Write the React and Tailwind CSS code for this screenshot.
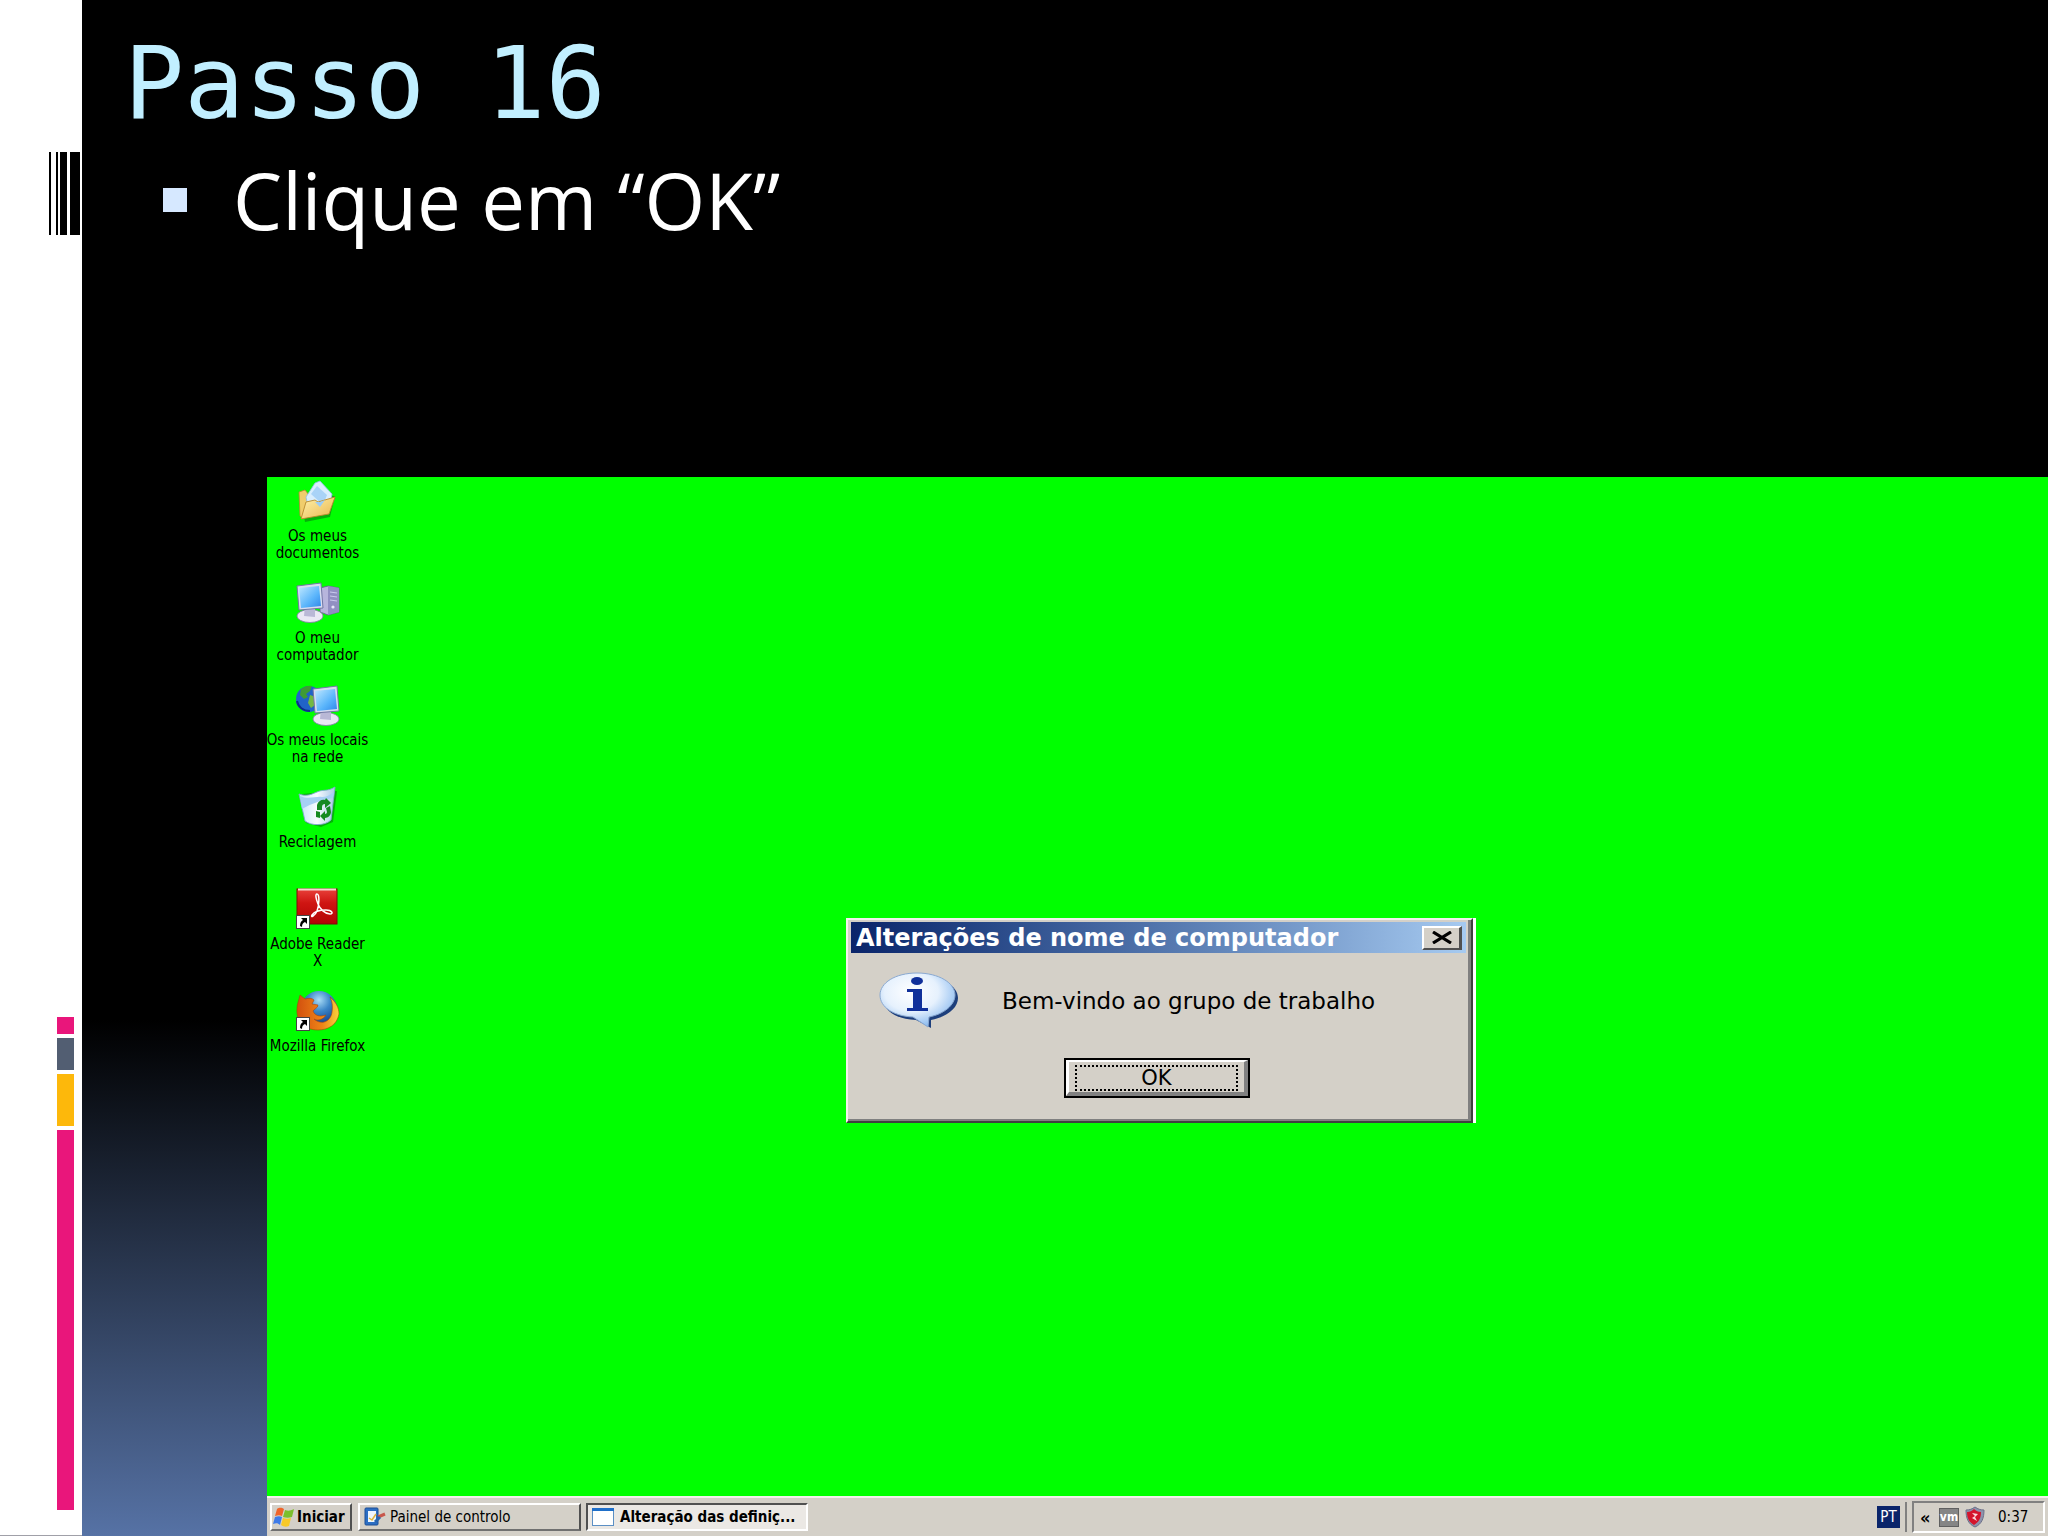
import React from "react";

const UI = "font-['DejaVu_Sans_Condensed','DejaVu_Sans',sans-serif] [font-stretch:condensed]";

function ShortcutArrow() {
  return (
    <g>
      <rect x="0.5" y="27.5" width="13" height="13" fill="#fff" stroke="#444" />
      <path d="M5 30h6v6l-2-2c-2 1-3 2-3 5l-2-1c0-3 1-5 3-6z" fill="#000" />
    </g>
  );
}

function DocumentsIcon() {
  return (
    <svg viewBox="0 0 44 42" className="h-[42px] w-11" aria-hidden="true">
      <defs>
        <linearGradient id="fold" x1="0" y1="0" x2="1" y2="1">
          <stop offset="0" stopColor="#fff3ae" />
          <stop offset="1" stopColor="#e9b54c" />
        </linearGradient>
      </defs>
      <path d="M4 13l6-2 3 4 26 1-5 21-25 5z" fill="#0a7a10" opacity=".6" />
      <path d="M3 12l6-2 4 5-5 24-4-3z" fill="#f0cd6c" stroke="#b98a2c" strokeWidth=".8" />
      <path d="M10 17L19 3l5-2 12 13-3 18-19 4z" fill="#d9eefd" stroke="#8bbce8" strokeWidth=".8" />
      <path d="M15 14l6-8 10 9-4 10z" fill="#a9d3f7" />
      <path d="M5 39l5-17 9-2 3 2 17-5-6 17z" fill="url(#fold)" stroke="#b98a2c" strokeWidth=".9" />
      <path d="M19 22l5 5 5-7-5 2z" fill="#9cccf4" />
    </svg>
  );
}

function Monitor({ x = 0 }) {
  return (
    <g transform={`translate(${x} 0)`}>
      <ellipse cx="14" cy="34" rx="13" ry="6.500" fill="#e9e8f4" stroke="#8785a8" strokeWidth=".9" />
      <path d="M9 24l10 2v9l-11-1z" fill="#b9b8d6" />
      <path d="M1 4l24-3 2 25-24 2z" fill="#d7dcf0" stroke="#7178a4" strokeWidth="1" />
      <path d="M3 6l20-2 2 20-20 2z" fill="url(#screen)" />
    </g>
  );
}

function ScreenGradient() {
  return (
    <defs>
      <linearGradient id="screen" x1="0" y1="0" x2="1" y2="1">
        <stop offset="0" stopColor="#bfe8ff" />
        <stop offset=".6" stopColor="#59b4fb" />
        <stop offset="1" stopColor="#2f86e8" />
      </linearGradient>
    </defs>
  );
}

function ComputerIcon() {
  return (
    <svg viewBox="0 0 44 42" className="h-[42px] w-11" aria-hidden="true">
      <ScreenGradient />
      <path d="M24 6l8-2 11 2v24l-11 3-8-3z" fill="#b7b5dc" stroke="#66648f" strokeWidth=".9" />
      <path d="M32 4l11 2v24l-11 3z" fill="#918fc2" />
      <path d="M34 10l7 1M34 14l7 1M34 18l7 1" stroke="#c9c8ec" strokeWidth="1.200" />
      <circle cx="37" cy="25" r="1.600" fill="#e6e6fa" />
      <Monitor />
    </svg>
  );
}

function NetworkIcon() {
  return (
    <svg viewBox="0 0 44 42" className="h-[42px] w-11" aria-hidden="true">
      <ScreenGradient />
      <circle cx="13" cy="15" r="13" fill="#2163c8" />
      <path d="M5 5c4-3 8-4 11-3l-2 5-4 3 2 3-4 2-4-4z" fill="#3f9b35" />
      <path d="M14 11l6 2-1 8-4 3-3-5z" fill="#73b943" />
      <path d="M1 17c1 6 6 10 13 10" fill="none" stroke="#0c2f86" strokeWidth="2" />
      <g transform="translate(0 1)">
        <Monitor x={16} />
      </g>
    </svg>
  );
}

function RecycleIcon() {
  return (
    <svg viewBox="0 0 44 42" className="h-[42px] w-11" aria-hidden="true">
      <defs>
        <linearGradient id="bin" x1="0" y1="0" x2="1" y2="0">
          <stop offset="0" stopColor="#c6e4fb" />
          <stop offset=".5" stopColor="#f8fcff" />
          <stop offset="1" stopColor="#a9c8e6" />
        </linearGradient>
      </defs>
      <path d="M6 8l35-3-4 31-12 5-15-4z" fill="#087310" opacity=".55" />
      <path d="M3 8c8 3 13 0 18-2 6-3 10 0 18-5l-4 33c-6 6-20 6-26 1z" fill="url(#bin)" stroke="#7fa8cf" strokeWidth=".9" />
      <path d="M4 10c8 4 16 0 22 1 4 0 8-2 12-5l-1 6c-10 2-21 5-31 11z" fill="#a6d0f4" />
      <g fill="#168a22">
        <path d="M21 24v-5c1-4 5-6 8-5l1-2 5 5-6 5v-4c-2 0-3 1-3 3v3z" />
        <path d="M34 20l1 6c0 3-3 6-6 6v3l-5-5 5-5v3c1 0 2-1 2-2l-1-4z" />
        <path d="M20 25l4 1v6l-4-1z" />
      </g>
    </svg>
  );
}

function AdobeIcon() {
  return (
    <svg viewBox="0 0 44 42" className="h-[42px] w-11" aria-hidden="true">
      <defs>
        <linearGradient id="pdf" x1="0" y1="0" x2="0" y2="1">
          <stop offset="0" stopColor="#e8413a" />
          <stop offset=".4" stopColor="#cf1512" />
          <stop offset="1" stopColor="#b30505" />
        </linearGradient>
      </defs>
      <rect x="1" y="1" width="40" height="35" fill="url(#pdf)" stroke="#7c0a08" />
      <path d="M2 1.500h38" stroke="#f3d9d2" strokeWidth="2" />
      <path d="M21 6c-2 0-1 5 1 10s7 10 12 10c4 0 2-4-4-4s-12 2-14 5 3 1 5-4 3-17 0-17z" fill="none" stroke="#fff" strokeWidth="1.500" />
      <ShortcutArrow />
    </svg>
  );
}

function FirefoxIcon() {
  return (
    <svg viewBox="0 0 44 42" className="h-[42px] w-11" aria-hidden="true">
      <defs>
        <radialGradient id="globe" cx=".5" cy=".25" r=".7">
          <stop offset="0" stopColor="#a9dcf6" />
          <stop offset=".45" stopColor="#3b86c8" />
          <stop offset="1" stopColor="#123c86" />
        </radialGradient>
        <linearGradient id="fox" x1="0" y1="0" x2="1" y2="0">
          <stop offset="0" stopColor="#d2500f" />
          <stop offset=".6" stopColor="#ee8417" />
          <stop offset="1" stopColor="#fbd33b" />
        </linearGradient>
      </defs>
      <circle cx="23" cy="19" r="18" fill="url(#globe)" />
      <path d="M4 5l5 4c4-1 7-1 9 1l-2 4 6 1c0 3-4 4-5 6 2 5 7 6 13 4-3 5-9 6-12 4 8 7 17 2 18-7 1-6 0-11-2-15 6 5 9 11 9 17-2 11-11 16-21 16C8 40 0 31 1 19c0-5 2-9 3-14z" fill="url(#fox)" stroke="#a8430d" strokeWidth=".6" />
      <ShortcutArrow />
    </svg>
  );
}

function InfoIcon() {
  return (
    <svg viewBox="0 0 80 58" className="h-[58px] w-20" aria-hidden="true">
      <defs>
        <radialGradient id="bubble" cx=".42" cy=".35" r=".65">
          <stop offset="0" stopColor="#fff" />
          <stop offset=".55" stopColor="#e6f1fd" />
          <stop offset="1" stopColor="#8fbdf0" />
        </radialGradient>
      </defs>
      <path d="M41 4c22 0 38 10 38 22 0 10-11 19-27 22v8L37 48C17 47 5 39 4 27z" fill="#1d3f7c" />
      <path d="M38 1c22 0 38 10 38 22 0 10-11 19-26 22l-1 10-15-10C14 44 1 35 1 23 1 11 16 1 38 1z" fill="url(#bubble)" stroke="#8aa9d1" />
      <ellipse cx="38" cy="9" rx="6" ry="4" fill="#10309a" />
      <path d="M28 17h15v19h6v3H28v-3h6V20h-6z" fill="#10309a" />
    </svg>
  );
}

function WindowsFlag() {
  return (
    <svg viewBox="0 0 22 20" className="h-5 w-[22px] shrink-0" aria-hidden="true">
      <path d="M4 2c3-2 5-1 7 0L9 9C7 8 5 8 2 9z" fill="#f0642a" />
      <path d="M12 3c3 1 5 1 9-1l-2 8c-3 1-6 1-9 0z" fill="#7cbf2c" />
      <path d="M2 10c3-1 5-1 7 0l-2 8c-2-2-4-2-7-1z" fill="#3f7be8" />
      <path d="M10 11c3 1 5 1 8 0l-2 8c-3 1-5 1-8-1z" fill="#f8c927" />
    </svg>
  );
}

function PanelIcon() {
  return (
    <svg viewBox="0 0 22 20" className="h-5 w-[22px] shrink-0" aria-hidden="true">
      <rect x="1" y="1" width="13" height="17" rx="1" fill="#2c6fc4" stroke="#1d4f95" />
      <rect x="4" y="4" width="8" height="11" fill="#eef6fd" />
      <path d="M5 11l3 2 4-6" fill="none" stroke="#e0b43c" strokeWidth="1.500" />
      <path d="M14 10l7-3" stroke="#c8574c" strokeWidth="3" />
      <path d="M11 15l5-5" stroke="#2a66b0" strokeWidth="3" />
    </svg>
  );
}

function WindowIcon() {
  return (
    <svg viewBox="0 0 22 18" className="h-[18px] w-[22px] shrink-0" aria-hidden="true">
      <rect x=".5" y=".5" width="21" height="17" fill="#fff" stroke="#5c8fc4" />
      <rect x="0" y="0" width="22" height="3" fill="#1f6fc9" />
    </svg>
  );
}

const desktopItems = [
  { lines: ["Os meus", "documentos"], Icon: DocumentsIcon },
  { lines: ["O meu", "computador"], Icon: ComputerIcon },
  { lines: ["Os meus locais", "na rede"], Icon: NetworkIcon },
  { lines: ["Reciclagem"], Icon: RecycleIcon },
  { lines: ["Adobe Reader", "X"], Icon: AdobeIcon },
  { lines: ["Mozilla Firefox"], Icon: FirefoxIcon },
];

function Sidebar() {
  return (
    <aside className="flex w-[82px] shrink-0 flex-col justify-between border-b border-[#a0a0a8] bg-white pt-[152px] pb-[25px]">
      <div className="flex h-[83px] justify-end pr-[2px]">
        <div className="w-[2px] bg-black" />
        <div className="ml-[5px] w-[2px] bg-black" />
        <div className="ml-[2px] w-[7px] bg-black" />
        <div className="ml-[3px] w-[10px] bg-black" />
      </div>
      <div className="ml-[57px] flex w-[17px] flex-col gap-1">
        <div className="h-[17px] bg-[#e9167b]" />
        <div className="h-8 bg-[#525e72]" />
        <div className="h-[52px] bg-[#fdb80b]" />
        <div className="h-[380px] bg-[#e9167b]" />
      </div>
    </aside>
  );
}

function Dialog() {
  return (
    <section
      aria-labelledby="dialog-title"
      className="absolute top-[441px] left-[579px] w-[630px] border-r-[3px] border-white font-['DejaVu_Sans',sans-serif]"
    >
      <div className="border-2 border-t-[#f4f2ee] border-r-[#404040] border-b-[#404040] border-l-[#f4f2ee] bg-[#d4d0c8]">
        <div className="border-r-[3px] border-b-2 border-[#808080] pt-[2px] pr-[2px] pl-[3px]">
          <div className="flex h-[31px] items-center justify-between bg-linear-to-r from-[#0a246a] to-[#a6caf0] pr-1 pl-[5px]">
            <h2 id="dialog-title" className="text-[24px] leading-none font-bold whitespace-nowrap text-white">
              Alterações de nome de computador
            </h2>
            <button
              type="button"
              aria-label="Fechar"
              className="flex h-6 w-10 items-center justify-center border-t-2 border-r-[3px] border-b-2 border-l-2 border-t-white border-r-[#505050] border-b-[#505050] border-l-white bg-[#d4d0c8]"
            >
              <svg viewBox="0 0 20 13" className="h-[13px] w-5" aria-hidden="true">
                <path d="M1 1l18 11M19 1L1 12" stroke="#000" strokeWidth="3.200" />
              </svg>
            </button>
          </div>
          <div className="flex h-[105px] items-start pt-[19px] pl-7">
            <InfoIcon />
            <p className="mt-[17px] ml-[43px] text-[23px] leading-6 whitespace-nowrap text-black">
              Bem-vindo ao grupo de trabalho
            </p>
          </div>
          <div className="flex h-[61px] items-start pl-[213px]">
            <button
              type="button"
              className="h-10 w-[186px] border-2 border-black bg-[#d4d0c8] text-[21px] leading-none text-black"
            >
              <span className="flex h-full border-t-2 border-r-4 border-b-4 border-l-[3px] border-t-white border-r-[#808080] border-b-[#808080] border-l-white px-[6px] pt-[3px] pb-[1px]">
                <span className="flex flex-1 items-center justify-center border-2 border-dotted border-black">OK</span>
              </span>
            </button>
          </div>
        </div>
      </div>
    </section>
  );
}

function Taskbar() {
  return (
    <footer className={`flex h-10 shrink-0 items-center border-t-2 border-[#f3f1ec] bg-[#d4d0c8] pl-[3px] text-[15px] text-black ${UI}`}>
      <button type="button" className="flex h-7 w-[82px] items-center gap-[2px] border-2 border-t-white border-r-[#505050] border-b-[#707070] border-l-white pl-px font-bold">
        <WindowsFlag />
        Iniciar
      </button>
      <button type="button" className="ml-[6px] flex h-7 w-[223px] items-center gap-1 border-2 border-t-white border-r-[#505050] border-b-[#707070] border-l-white pl-1">
        <PanelIcon />
        Painel de controlo
      </button>
      <button type="button" className="ml-[5px] flex h-7 w-[222px] items-center gap-[6px] border-2 border-t-[#505050] border-r-white border-b-white border-l-[#505050] bg-[#ebe8e4] pl-1 font-bold whitespace-nowrap">
        <WindowIcon />
        Alteração das definiç...
      </button>
      <div className="ml-auto flex items-center">
        <span className="flex h-[22px] w-[23px] items-center justify-center bg-[#0a246a] text-white">PT</span>
        <span className="ml-[5px] h-[30px] w-[2px] bg-[#808080]" />
        <div className="mr-[3px] ml-[5px] flex h-8 w-[133px] items-center border-2 border-t-[#808080] border-r-white border-b-white border-l-[#808080] pl-[6px]">
          <span className="w-4 text-[18px] font-bold">«</span>
          <span className="ml-[3px] flex h-[19px] w-5 items-center justify-center border border-[#606060] bg-[#858585] text-[12px] font-bold text-white">vm</span>
          <svg viewBox="0 0 20 22" className="ml-[6px] h-[22px] w-5" aria-hidden="true">
            <path d="M1 4c4 0 6-1 9-3 3 2 5 3 9 3 0 8-2 14-9 17C3 18 1 12 1 4z" fill="#8d93ad" stroke="#6b7088" />
            <path d="M2 6c3 0 5-1 7-3 2 2 4 3 7 3 0 6-2 10-7 13C4 16 2 12 2 6z" fill="#d4142c" />
            <path d="M7 7l6 1-3 3 2 4-5-3 3-2z" fill="#fbd9dc" />
          </svg>
          <time className="ml-[13px]">0:37</time>
        </div>
      </div>
    </footer>
  );
}

export default function App() {
  return (
    <div className="flex min-h-screen bg-black">
      <Sidebar />
      <main className="flex min-w-0 flex-1 flex-col bg-[linear-gradient(to_top,#5672a5_0px,#000_516px)]">
        <header className="h-[477px] pt-6 pl-[42px]">
          <h1 className="font-['DejaVu_Sans_Mono',monospace] text-[100px] leading-[120px] text-[#c1efff]">Passo 16</h1>
          <ul className="pl-[39px]">
            <li className="flex items-center gap-[46px] font-['Open_Sans',sans-serif] text-[78px] leading-[112px] text-white">
              <span className="size-6 bg-[#d6e8ff]" />
              Clique em “OK”
            </li>
          </ul>
        </header>
        <div className="ml-[185px] flex flex-1 flex-col">
          <div className="relative flex-1 bg-[#00ff00]">
            <ul className={`flex w-[101px] flex-col pt-[3px] text-[15px] leading-[17px] text-black ${UI}`}>
              {desktopItems.map(({ lines, Icon }) => (
                <li key={lines[0]} className="flex h-[102px] flex-col items-center">
                  <Icon />
                  <span className="mt-[6px] flex flex-col items-center whitespace-nowrap">
                    {lines.map((line) => (
                      <span key={line}>{line}</span>
                    ))}
                  </span>
                </li>
              ))}
            </ul>
            <Dialog />
          </div>
          <Taskbar />
        </div>
      </main>
    </div>
  );
}
